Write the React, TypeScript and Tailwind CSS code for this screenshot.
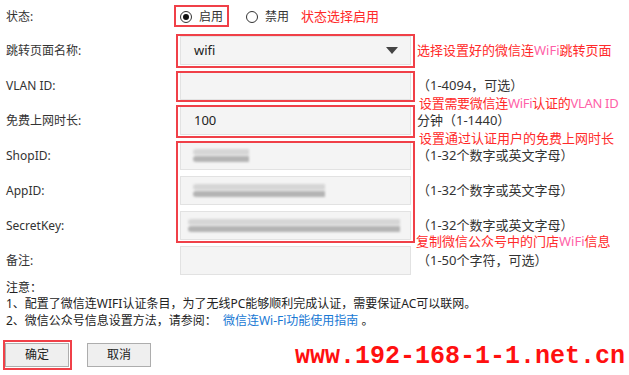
import React from 'react'

const font = { fontFamily: '"Noto Sans", "Noto Sans CJK SC", sans-serif' }

function Pink({ children }: { children: React.ReactNode }) {
  return <span className="text-[#ff5fa8]">{children}</span>
}

function Blur({ w, offset = 0 }: { w: number; offset?: number }) {
  return (
    <div className="flex flex-col gap-[1px] blur-[1.2px]" style={{ width: w, marginLeft: offset }}>
      <div className="h-[6px] rounded-l-full bg-[#d6d6d6]" />
      <div className="h-[6px] rounded-l-full bg-[#b4b4b4]" />
    </div>
  )
}

function Row({
  label,
  children,
  hint,
  note,
  noteTop = 'top-[26px]',
}: {
  label: string
  children?: React.ReactNode
  hint?: React.ReactNode
  note?: React.ReactNode
  noteTop?: string
}) {
  return (
    <div className="relative flex items-center h-[35px]">
      <div className="w-[180px] pl-[6px] text-[12px] text-[#333]">{label}</div>
      <div className="w-[231px] h-[29px] flex items-center bg-[#f4f4f4] border border-[#e2e2e2] text-[13px] text-[#222]">
        {children}
      </div>
      <div className="pl-[6px] text-[13px] text-[#333] whitespace-nowrap">{hint}</div>
      {note && (
        <div className={`absolute left-[419px] ${noteTop} text-[13px] leading-[16px] text-[#ff2a2a] whitespace-nowrap`}>
          {note}
        </div>
      )}
    </div>
  )
}

export default function App() {
  const red = 'absolute border-2 border-[#f04048]'
  return (
    <div className="relative w-[629px] h-[375px] bg-white overflow-hidden text-[#333]" style={font}>
      <div className="flex flex-col">
        {/* status */}
        <div className="flex items-center h-[33px]">
          <div className="w-[180px] pl-[6px] text-[12px]">状态:</div>
          <div className="flex items-center gap-[7px] text-[12px]">
            <span className="w-[12px] h-[12px] rounded-full border border-[#333] flex items-center justify-center">
              <span className="w-[6px] h-[6px] rounded-full bg-[#111]" />
            </span>
            <span>启用</span>
          </div>
          <div className="flex items-center gap-[7px] text-[12px] ml-[23px]">
            <span className="w-[12px] h-[12px] rounded-full border border-[#333]" />
            <span>禁用</span>
          </div>
          <div className="ml-[12px] text-[13px] text-[#ff2a2a]">状态选择启用</div>
        </div>

        <Row
          label="跳转页面名称:"
          hint={
            <span className="text-[#ff2a2a]">
              选择设置好的微信连<Pink>WiFi</Pink>跳转页面
            </span>
          }
        >
          <div className="flex-1 flex items-center justify-between pl-[13px] pr-[12px]">
            <span>wifi</span>
            <svg width="12" height="8" viewBox="0 0 12 8">
              <path d="M0 0 H12 L6 7 Z" fill="#444" />
            </svg>
          </div>
        </Row>

        <Row
          label="VLAN ID:"
          hint="（1-4094，可选）"
          note={
            <span className="tracking-[-0.3px]">
              设置需要微信连<Pink>WiFi</Pink>认证的<Pink>VLAN ID</Pink>
            </span>
          }
          noteTop="top-[27px]"
        />

        <Row label="免费上网时长:" hint="分钟（1-1440）" note="设置通过认证用户的免费上网时长" noteTop="top-[27px]">
          <span className="pl-[13px]">100</span>
        </Row>

        <Row label="ShopID:" hint="（1-32个数字或英文字母）">
          <Blur w={56} offset={12} />
        </Row>

        <Row label="AppID:" hint="（1-32个数字或英文字母）">
          <Blur w={132} offset={12} />
        </Row>

        <Row
          label="SecretKey:"
          hint="（1-32个数字或英文字母）"
          note={
            <>
              复制微信公众号中的门店<Pink>WiFi</Pink>信息
            </>
          }
          noteTop="top-[25px] -ml-[3px]"
        >
          <Blur w={212} offset={7} />
        </Row>

        <Row label="备注:" hint="（1-50个字符，可选）" />

        <div className="pl-[6px] pt-[2px] text-[12px] leading-[15px] text-[#222]">
          <div className="leading-[16px]">注意：</div>
          <div>1、配置了微信连WIFI认证条目，为了无线PC能够顺利完成认证，需要保证AC可以联网。</div>
          <div className="mt-[2px]">
            2、微信公众号信息设置方法，请参阅：
            <span className="ml-[6px] text-[#1878d4]">微信连Wi-Fi功能使用指南</span> 。
          </div>
        </div>

        <div className="flex items-center justify-between h-[24px] mt-[15px] pl-[5px] pr-[4px]">
          <div className="flex items-center gap-[18px]">
            <button className="w-[64px] h-[24px] border border-[#adadad] bg-[#efefef] text-[12px] text-[#222]">确定</button>
            <button className="w-[64px] h-[24px] border border-[#adadad] bg-[#efefef] text-[12px] text-[#222]">取消</button>
          </div>
          <div className="text-[25px] font-bold leading-[24px] pt-[4px] text-[#ff1010]" style={{ fontFamily: '"Liberation Mono", monospace' }}>
            www.192-168-1-1.net.cn
          </div>
        </div>
      </div>

      {/* annotation boxes */}
      <div className={`${red} left-[174px] top-[5px] w-[55px] h-[22px]`} />
      <div className={`${red} left-[176px] top-[34px] w-[239px] h-[34px]`} />
      <div className={`${red} left-[176px] top-[71px] w-[239px] h-[31px]`} />
      <div className={`${red} left-[176px] top-[105px] w-[239px] h-[33px]`} />
      <div className={`${red} left-[176px] top-[141px] w-[239px] h-[102px]`} />
      <div className={`${red} left-[3px] top-[340px] w-[69px] h-[30px]`} />
    </div>
  )
}
